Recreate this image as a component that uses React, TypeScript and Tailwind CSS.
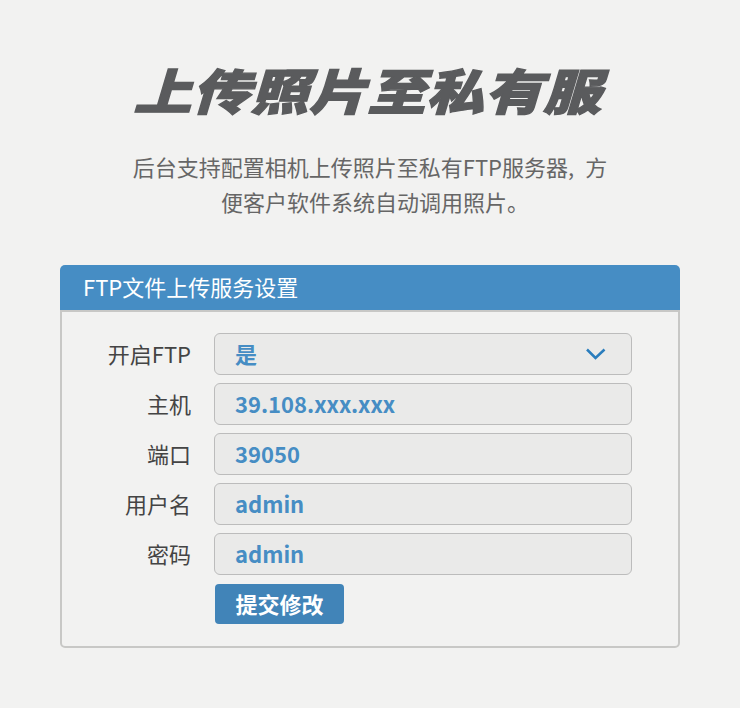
const cjk = "font-['Noto_Sans_CJK_SC','Noto_Sans',sans-serif]";

const fields = [
  { label: "开启FTP", value: "是", select: true },
  { label: "主机", value: "39.108.xxx.xxx" },
  { label: "端口", value: "39050" },
  { label: "用户名", value: "admin" },
  { label: "密码", value: "admin" },
];

export default function App() {
  return (
    <main className={`${cjk} flex min-h-[708px] w-[740px] flex-col items-center bg-[#f2f2f1] pt-[52px]`}>
      <h1 className="mr-[5px] h-[74px] scale-y-[0.84] text-[58px] leading-[74px] font-black tracking-[0.5px] text-[#5a5b5d] italic [-webkit-text-stroke:1.5px_#5a5b5d]">
        上传照片至私有服
      </h1>

      <div className="mt-[23px] text-center text-[22px] leading-[35px] text-[#666666]">
        <p className="whitespace-nowrap">后台支持配置相机上传照片至私有FTP服务器,{"\u2002"}方</p>
        <p className="pl-2.5 whitespace-nowrap">便客户软件系统自动调用照片。</p>
      </div>

      <section className="mt-[46px] w-[620px]">
        <h2 className="flex h-[45px] items-center rounded-t-[5px] bg-[#468dc4] pb-0.5 pl-[23px] text-[22px] text-white">
          FTP文件上传服务设置
        </h2>

        <div className="flex h-[338px] flex-col gap-2 rounded-b-[5px] border-2 border-[#c8c8c6] pt-[21px]">
          {fields.map(({ label, value, select }) => (
            <div key={label} className="flex items-center">
              <span className="w-[129px] pb-0.5 text-right text-[22px] text-[#444444]">{label}</span>
              <div className="ml-[23px] flex h-[42px] w-[418px] items-center justify-between rounded-[6px] border border-[#bcbcbc] bg-[#eaeae9] pr-6 pl-5">
                <span className="pb-0.5 text-[22px] font-bold text-[#468dc4]">{value}</span>
                {select && (
                  <svg width="22" height="14" viewBox="0 0 22 14" fill="none" stroke="#2a7dbd" strokeWidth="2.5">
                    <path d="M2 2.5 L10.5 11 L19.5 2.5" />
                  </svg>
                )}
              </div>
            </div>
          ))}
          <button className="mt-px ml-[153px] h-10 w-[129px] rounded-[4px] bg-[#4184b8] pb-0.5 text-[22px] font-bold text-white">
            提交修改
          </button>
        </div>
      </section>
    </main>
  );
}
